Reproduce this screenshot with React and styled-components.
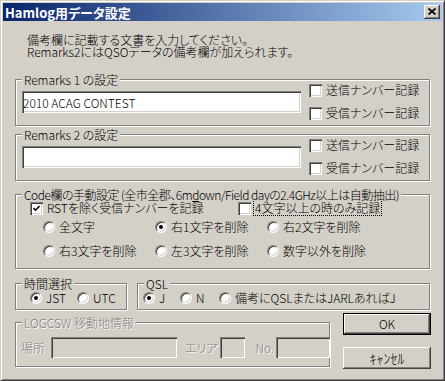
import React from "react";
import styled, { createGlobalStyle } from "styled-components";

const face = "#d4d0c8";

const GlobalStyle = createGlobalStyle`
  html, body {
    margin: 0;
    padding: 0;
    background: ${face};
  }
  body, input, button {
    font-family: "Noto Sans CJK JP", "Liberation Sans", sans-serif;
    font-size: 12px;
    font-weight: 300;
    font-feature-settings: "palt";
    color: #000;
  }
  * {
    box-sizing: border-box;
  }
`;

const Window = styled.div`
  width: 445px;
  height: 381px;
  background: ${face};
  border: 1px solid;
  border-color: ${face} #404040 #404040 ${face};
  box-shadow: inset 1px 1px 0 #fff, inset -1px -1px 0 #808080;
  padding: 2px;
  display: flex;
  flex-direction: column;
`;

const TitleBar = styled.div`
  height: 18px;
  flex-shrink: 0;
  background: linear-gradient(to right, #0a246a, #a6caf0);
  display: flex;
  align-items: center;
  justify-content: space-between;
  padding: 0 2px 0 2px;
`;

const TitleText = styled.span`
  color: #fff;
  font-weight: bold;
  font-size: 13px;
  line-height: 15px;
`;

const CloseButton = styled.div`
  width: 16px;
  height: 14px;
  background: ${face};
  box-shadow: inset -1px -1px 0 #404040, inset 1px 1px 0 #fff,
    inset -2px -2px 0 #808080, inset 2px 2px 0 ${face};
  display: flex;
  align-items: center;
  justify-content: center;
  padding: 0 1px 1px 0;
`;

const Body = styled.div`
  display: flex;
  flex-direction: column;
  padding: 13px 12px 0 12px;
`;

const Instruction = styled.div`
  margin-left: 12px;
  line-height: 12px;
  white-space: nowrap;
`;

const Group = styled.div`
  position: relative;
  flex-shrink: 0;
  height: ${(p) => p.$height}px;
  width: ${(p) => (p.$width ? `${p.$width}px` : "auto")};
  flex-grow: ${(p) => (p.$grow ? 1 : 0)};
  margin-top: ${(p) => p.$mt || 0}px;
  border: 1px solid #808080;
  box-shadow: inset 1px 1px 0 #fff, 1px 1px 0 #fff;
`;

const Caption = styled.span`
  position: absolute;
  top: -7px;
  left: 6px;
  padding: 0 2px;
  background: ${face};
  line-height: 13px;
  white-space: nowrap;
  letter-spacing: ${(p) => (p.$tight ? "-0.5px" : "0")};
  color: ${(p) => (p.$disabled ? "#808080" : "#000")};
  text-shadow: ${(p) => (p.$disabled ? "1px 1px 0 #fff" : "none")};
`;

const RemarkRow = styled.div`
  display: flex;
  align-items: flex-start;
  padding-left: 6px;
`;

const TextBox = styled.input`
  width: ${(p) => p.$width}px;
  height: ${(p) => p.$h || 22}px;
  margin: ${(p) => p.$margin || 0};
  padding: 0 1px;
  border: none;
  outline: none;
  background: ${(p) => (p.disabled ? face : "#fff")};
  box-shadow: inset 1px 1px 0 #808080, inset 2px 2px 0 #404040,
    inset -1px -1px 0 #fff, inset -2px -2px 0 ${face};
  line-height: 18px;
  font-size: 12px;
`;

const CheckColumn = styled.div`
  display: flex;
  flex-direction: column;
  gap: 9px;
  margin: 3px 0 0 8px;
`;

const Option = styled.label`
  display: flex;
  align-items: center;
  gap: ${(p) => (p.$gap != null ? p.$gap : 4)}px;
  height: 14px;
  width: ${(p) => (p.$width ? `${p.$width}px` : "auto")};
  white-space: nowrap;
  line-height: 14px;
  flex-shrink: 0;
`;

const Box = styled.span`
  width: 13px;
  height: 13px;
  flex-shrink: 0;
  background: #fff;
  box-shadow: inset 1px 1px 0 #808080, inset 2px 2px 0 #404040,
    inset -1px -1px 0 #fff, inset -2px -2px 0 ${face};
  display: flex;
  align-items: center;
  justify-content: center;
`;

const Round = styled.span`
  width: 12px;
  height: 12px;
  flex-shrink: 0;
  border-radius: 50%;
  background: #fff;
  border: 1px solid;
  border-color: #808080 #fff #fff #808080;
  box-shadow: inset 1px 1px 0 #404040, inset -1px -1px 0 ${face};
  display: flex;
  align-items: center;
  justify-content: center;
`;

const Dot = styled.span`
  width: 4px;
  height: 4px;
  border-radius: 50%;
  background: #000;
`;

const Focus = styled.span`
  outline: 1px dotted #000;
  outline-offset: 0;
  padding: 0 1px;
`;

const CodeBody = styled.div`
  display: flex;
  flex-direction: column;
  padding: 6px 0 0 14px;
`;

const CheckLine = styled.div`
  display: grid;
  grid-template-columns: 208px auto;
`;

const RadioGrid = styled.div`
  display: grid;
  grid-template-columns: repeat(3, 112px);
  row-gap: 10px;
  margin: 5px 0 0 13px;
`;

const PairRow = styled.div`
  display: flex;
  gap: 10px;
  margin-top: 14px;
`;

const RadioRow = styled.div`
  display: flex;
  align-items: center;
  padding: 7px 0 0 ${(p) => p.$pl}px;
`;

const BottomRow = styled.div`
  display: flex;
  align-items: flex-start;
  margin-top: 3px;
`;

const LogRow = styled.div`
  display: flex;
  align-items: center;
  padding: 14px 0 0 5px;
`;

const Dim = styled.span`
  color: #808080;
  text-shadow: 1px 1px 0 #fff;
  margin: 0 ${(p) => p.$mr || 0}px 0 ${(p) => p.$ml || 0}px;
  white-space: nowrap;
`;

const ButtonColumn = styled.div`
  display: flex;
  flex-direction: column;
  gap: 12px;
  margin-left: 13px;
  margin-right: -1px;
`;

const Button = styled.button`
  width: 88px;
  height: 22px;
  padding: 0;
  background: ${face};
  border: ${(p) => (p.$default ? "1px solid #000" : "none")};
  box-shadow: inset -1px -1px 0 #404040, inset 1px 1px 0 #fff,
    inset -2px -2px 0 #808080;
  line-height: 18px;
  font-size: ${(p) => p.$size || 12}px;
`;

function CheckItem({ checked, children, gap }) {
  return (
    <Option $gap={gap}>
      <Box>
        {checked && (
          <svg width="7" height="7" viewBox="0 0 7 7">
            <path d="M0.5 3 L2.5 5.2 L6.5 1" stroke="#000" strokeWidth="1.6" fill="none" />
          </svg>
        )}
      </Box>
      {children}
    </Option>
  );
}

function RadioItem({ checked, children, width }) {
  return (
    <Option $width={width}>
      <Round>{checked && <Dot />}</Round>
      {children}
    </Option>
  );
}

export default function App() {
  return (
    <>
      <GlobalStyle />
      <Window>
        <TitleBar>
          <TitleText>Hamlog用データ設定</TitleText>
          <CloseButton>
            <svg width="8" height="7" viewBox="0 0 8 7">
              <path d="M0.5 0.5 L7.5 6.5 M7.5 0.5 L0.5 6.5" stroke="#000" strokeWidth="1.7" />
            </svg>
          </CloseButton>
        </TitleBar>
        <Body>
          <Instruction>
            備考欄に記載する文書を入力してください。
            <br />
            Remarks2にはQSOデータの備考欄が加えられます。
          </Instruction>

          <Group $height={47} $mt={21}>
            <Caption>Remarks 1 の設定</Caption>
            <RemarkRow>
              <TextBox $width={279} $margin="11px 0 0 0" defaultValue="2010 ACAG CONTEST" />
              <CheckColumn>
                <CheckItem>送信ナンバー記録</CheckItem>
                <CheckItem>受信ナンバー記録</CheckItem>
              </CheckColumn>
            </RemarkRow>
          </Group>

          <Group $height={47} $mt={8}>
            <Caption>Remarks 2 の設定</Caption>
            <RemarkRow>
              <TextBox $width={279} $margin="11px 0 0 0" defaultValue="" />
              <CheckColumn>
                <CheckItem>送信ナンバー記録</CheckItem>
                <CheckItem>受信ナンバー記録</CheckItem>
              </CheckColumn>
            </RemarkRow>
          </Group>

          <Group $height={75} $mt={13}>
            <Caption $tight>
              Code欄の手動設定 (全市全郡、6m<u>d</u>own/Field dayの2.4GHz以上は自動抽出)
            </Caption>
            <CodeBody>
              <CheckLine>
                <CheckItem checked>RSTを除く受信ナンバーを記録</CheckItem>
                <CheckItem gap={3}>
                  <Focus>4文字以上の時のみ記録</Focus>
                </CheckItem>
              </CheckLine>
              <RadioGrid>
                <RadioItem>全文字</RadioItem>
                <RadioItem checked>右1文字を削除</RadioItem>
                <RadioItem>右2文字を削除</RadioItem>
                <RadioItem>右3文字を削除</RadioItem>
                <RadioItem>左3文字を削除</RadioItem>
                <RadioItem>数字以外を削除</RadioItem>
              </RadioGrid>
            </CodeBody>
          </Group>

          <PairRow>
            <Group $height={27} $width={112}>
              <Caption>時間選択</Caption>
              <RadioRow $pl={14}>
                <RadioItem checked width={47}>JST</RadioItem>
                <RadioItem>UTC</RadioItem>
              </RadioRow>
            </Group>
            <Group $height={27} $grow>
              <Caption>QSL</Caption>
              <RadioRow $pl={5}>
                <RadioItem checked width={37}>J</RadioItem>
                <RadioItem width={39}>N</RadioItem>
                <RadioItem>備考にQSLまたはJARLあればJ</RadioItem>
              </RadioRow>
            </Group>
          </PairRow>

          <BottomRow>
            <Group $height={45} $width={315} $mt={9}>
              <Caption $disabled>LOGCSW 移動地情報</Caption>
              <LogRow>
                <Dim $mr={6}>場所</Dim>
                <TextBox $width={126} $h={21} disabled />
                <Dim $ml={8} $mr={2}>エリア</Dim>
                <TextBox $width={25} $h={21} disabled />
                <Dim $ml={11} $mr={2}>No.</Dim>
                <TextBox $width={54} $h={21} disabled />
              </LogRow>
            </Group>
            <ButtonColumn>
              <Button $default>OK</Button>
              <Button $size={14}>ｷｬﾝｾﾙ</Button>
            </ButtonColumn>
          </BottomRow>
        </Body>
      </Window>
    </>
  );
}
